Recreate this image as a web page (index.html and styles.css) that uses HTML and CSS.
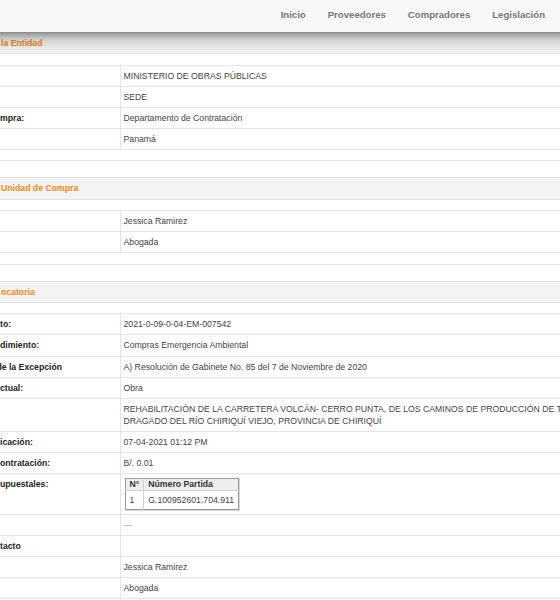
FILE: index.html
```html
<!DOCTYPE html>
<html lang="es">
<head>
<meta charset="utf-8">
<title>Convocatoria</title>
<link rel="stylesheet" href="styles.css">
</head>
<body>
<header class="topbar">
  <nav class="nav">
    <a class="nav-link">Inicio</a>
    <a class="nav-link">Proveedores</a>
    <a class="nav-link">Compradores</a>
    <a class="nav-link">Legislación</a>
  </nav>
</header>
<main class="content">
  <table class="info">
    <colgroup><col class="col-label"><col></colgroup>
    <tr class="sec-head"><th colspan="2">la Entidad</th></tr>
    <tr class="spacer"><td colspan="2"></td></tr>
    <tr><td class="label"></td><td class="value">MINISTERIO DE OBRAS PÚBLICAS</td></tr>
    <tr><td class="label"></td><td class="value">SEDE</td></tr>
    <tr><td class="label">mpra:</td><td class="value">Departamento de Contratación</td></tr>
    <tr><td class="label"></td><td class="value">Panamá</td></tr>
    <tr class="spacer"><td colspan="2"></td></tr>
  </table>

  <table class="info">
    <colgroup><col class="col-label"><col></colgroup>
    <tr class="sec-head"><th colspan="2">Unidad de Compra</th></tr>
    <tr class="spacer"><td colspan="2"></td></tr>
    <tr><td class="label"></td><td class="value">Jessica Ramirez</td></tr>
    <tr><td class="label"></td><td class="value">Abogada</td></tr>
    <tr class="spacer"><td colspan="2"></td></tr>
  </table>

  <table class="info">
    <colgroup><col class="col-label"><col></colgroup>
    <tr class="sec-head"><th colspan="2">ocatoria</th></tr>
    <tr class="spacer"><td colspan="2"></td></tr>
    <tr><td class="label">to:</td><td class="value">2021-0-09-0-04-EM-007542</td></tr>
    <tr><td class="label">dimiento:</td><td class="value">Compras Emergencia Ambiental</td></tr>
    <tr><td class="label"><span class="cut">de la Excepción</span></td><td class="value">A) Resolución de Gabinete No. 85 del 7 de Noviembre de 2020</td></tr>
    <tr><td class="label">ctual:</td><td class="value">Obra</td></tr>
    <tr><td class="label"></td><td class="value">REHABILITACIÓN DE LA CARRETERA VOLCÁN- CERRO PUNTA, DE LOS CAMINOS DE PRODUCCIÓN DE TIERRAS ALTAS Y<br>DRAGADO DEL RÍO CHIRIQUÍ VIEJO, PROVINCIA DE CHIRIQUÍ</td></tr>
    <tr><td class="label">icación:</td><td class="value">07-04-2021 01:12 PM</td></tr>
    <tr><td class="label">ontratación:</td><td class="value">B/. 0.01</td></tr>
    <tr>
      <td class="label">upuestales:</td>
      <td class="value">
        <table class="partidas">
          <tr><th class="p-num">N°</th><th>Número Partida</th></tr>
          <tr><td class="p-num">1</td><td>G.100952601.704.911</td></tr>
        </table>
      </td>
    </tr>
    <tr><td class="label"></td><td class="value muted">---</td></tr>
    <tr><td class="label">tacto</td><td class="value"></td></tr>
    <tr><td class="label"></td><td class="value">Jessica Ramirez</td></tr>
    <tr><td class="label"></td><td class="value">Abogada</td></tr>
  </table>
</main>
</body>
</html>
```
FILE: styles.css
```css
html, body {
  margin: 0;
  padding: 0;
  overflow: hidden;
  background: #ffffff;
}

body {
  font-family: "Liberation Sans", Arial, Helvetica, sans-serif;
  font-size: 8.7px;
  color: #444444;
}

.topbar {
  position: relative;
  z-index: 2;
  height: 32px;
  background: #f8f8f8;
  display: flex;
  justify-content: flex-end;
  align-items: center;
}

.topbar::after {
  content: "";
  position: absolute;
  left: 0;
  right: 0;
  top: 100%;
  height: 20px;
  background: linear-gradient(rgba(0, 0, 0, 0.4), rgba(0, 0, 0, 0.14) 40%, rgba(0, 0, 0, 0));
  pointer-events: none;
}

.nav {
  display: flex;
  gap: 22px;
  padding-right: 15px;
  padding-bottom: 3px;
}

.nav-link {
  font-size: 9.6px;
  font-weight: bold;
  color: #777777;
  text-decoration: none;
}

.content {
  width: 760px;
  display: flex;
  flex-direction: column;
  gap: 16px;
}

.info {
  width: 760px;
  border-collapse: collapse;
  table-layout: fixed;
}

.col-label {
  width: 120px;
}

.info > tbody > tr > td,
.info > tbody > tr > th {
  border-bottom: 1px solid #e4e4e4;
  padding: 4px 3px 4px 3px;
  line-height: 12.1px;
  vertical-align: top;
  text-align: left;
  white-space: nowrap;
}

.sec-head th {
  background: #f3f3f3;
  color: #f28a18;
  font-weight: bold;
  border-top: 1px solid #e4e4e4;
  padding-left: 1px !important;
}

.info > tbody > tr.spacer > td {
  height: 10.5px;
  padding: 0;
}

.info > tbody > tr > td.label {
  border-right: 1px solid #e4e4e4;
  padding-left: 0;
  font-weight: bold;
  color: #222222;
  overflow: hidden;
}

.cut {
  display: inline-block;
  margin-left: -3.6px;
}

.value {
  color: #444444;
}

.muted {
  color: #999999;
}

.partidas {
  border-collapse: collapse;
  margin: 0 0 0 1px;
  border: 1px solid #999999;
  box-shadow: 1px 1px 0 #d8d8d8;
}

.partidas th,
.partidas td {
  padding: 0 4px;
  text-align: left;
  white-space: nowrap;
  border-left: 1px solid #d0d0d0;
  color: #333333;
}

.partidas th {
  background: #eeeeee;
  font-weight: bold;
  line-height: 11px;
  border-bottom: 1px solid #d0d0d0;
}

.partidas td {
  line-height: 12px;
  padding-top: 3px;
  padding-bottom: 3px;
  color: #444444;
}

.partidas .p-num {
  border-left: none;
}
```
